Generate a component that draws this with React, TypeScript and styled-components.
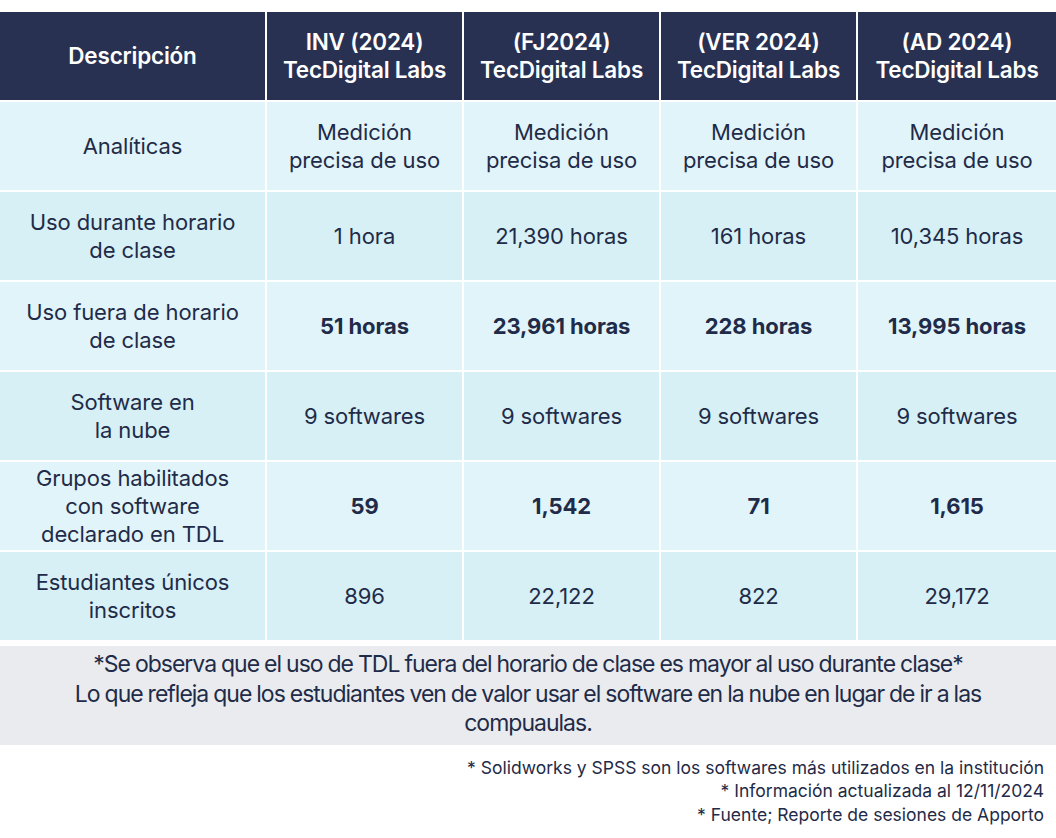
import React from "react";
import styled, { createGlobalStyle } from "styled-components";

const Global = createGlobalStyle`
  html, body { margin: 0; padding: 0; background: #ffffff; }
  body { font-family: Inter, "Noto Sans", sans-serif; color: #1f2b48; }
`;

const Page = styled.div`
  width: 1056px;
  padding-top: 12px;
`;

const Table = styled.div`
  display: grid;
  grid-template-columns: 265px 195px 195px 195px 1fr;
  grid-auto-rows: 88px;
  gap: 2px;
  background: #ffffff;
`;

const HeadCell = styled.div`
  background: #283152;
  color: #ffffff;
  font-weight: 600;
  font-size: 22.5px;
  line-height: 28px;
  display: flex;
  align-items: center;
  justify-content: center;
  text-align: center;
  letter-spacing: -0.2px;
  white-space: pre-line;
`;

const Cell = styled.div<{ $alt: boolean; $bold?: boolean }>`
  background: ${(p) => (p.$alt ? "#d6f0f5" : "#e1f4f9")};
  color: #1f2b48;
  font-size: 22px;
  font-weight: ${(p) => (p.$bold ? 700 : 400)};
  line-height: 28px;
  letter-spacing: -0.1px;
  display: flex;
  align-items: center;
  justify-content: center;
  text-align: center;
  white-space: pre-line;
`;

const Note = styled.div`
  margin-top: 6px;
  background: #e9ebee;
  padding: 4px 0 6px;
  text-align: center;
  font-size: 23px;
  line-height: 29.5px;
  letter-spacing: -1px;
  word-spacing: -0.5px;
  color: #1f2b48;
`;

const Footer = styled.div`
  padding: 11px 12px 0 0;
  text-align: right;
  font-size: 17.5px;
  line-height: 23.5px;
  color: #1f2b48;
`;

type Row = { label: string; values: string[]; bold?: boolean };

const headers = [
  "Descripción",
  "INV (2024)\nTecDigital Labs",
  "(FJ2024)\nTecDigital Labs",
  "(VER 2024)\nTecDigital Labs",
  "(AD 2024)\nTecDigital Labs",
];

const rows: Row[] = [
  { label: "Analíticas", values: Array(4).fill("Medición\nprecisa de uso") },
  { label: "Uso durante horario\nde clase", values: ["1 hora", "21,390 horas", "161 horas", "10,345 horas"] },
  { label: "Uso fuera de horario\nde clase", values: ["51 horas", "23,961 horas", "228 horas", "13,995 horas"], bold: true },
  { label: "Software en\nla nube", values: Array(4).fill("9 softwares") },
  { label: "Grupos habilitados\ncon software\ndeclarado en TDL", values: ["59", "1,542", "71", "1,615"], bold: true },
  { label: "Estudiantes únicos\ninscritos", values: ["896", "22,122", "822", "29,172"] },
];

export default function App() {
  return (
    <Page>
      <Global />
      <Table>
        {headers.map((h) => (
          <HeadCell key={h}>{h}</HeadCell>
        ))}
        {rows.map((r, i) => (
          <React.Fragment key={r.label}>
            <Cell $alt={i % 2 === 1}>{r.label}</Cell>
            {r.values.map((v, j) => (
              <Cell key={j} $alt={i % 2 === 1} $bold={r.bold}>
                {v}
              </Cell>
            ))}
          </React.Fragment>
        ))}
      </Table>
      <Note>
        *Se observa que el uso de TDL fuera del horario de clase es mayor al uso durante clase*
        <br />
        Lo que refleja que los estudiantes ven de valor usar el software en la nube en lugar de ir a las
        <br />
        compuaulas.
      </Note>
      <Footer>
        * Solidworks y SPSS son los softwares más utilizados en la institución
        <br />
        * Información actualizada al 12/11/2024
        <br />
        * Fuente; Reporte de sesiones de Apporto
      </Footer>
    </Page>
  );
}
